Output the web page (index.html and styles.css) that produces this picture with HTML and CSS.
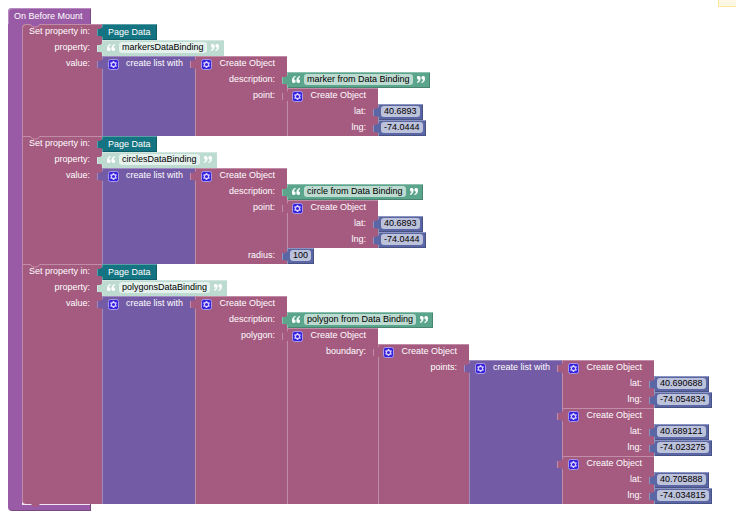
FILE: index.html
```html
<!DOCTYPE html>
<html lang="en">
<head>
<meta charset="utf-8">
<meta name="viewport" content="width=device-width, initial-scale=1">
<title>On Before Mount</title>
<link rel="stylesheet" href="styles.css">
</head>
<body>
<svg class="defs" aria-hidden="true">
  <symbol id="gear" viewBox="0 0 11 11">
    <rect x=".5" y=".5" width="10" height="10" rx="2" fill="#3a22dc" stroke="#a49be8"/>
    <path d="M5.500 2v1M5.500 8v1M2.500 3.700l.9.600M7.600 6.700l.9.600M2.500 7.300l.9-.600M7.600 4.300l.9-.600" stroke="#d5d0ff" stroke-width="1.500"/>
    <circle cx="5.500" cy="5.500" r="2.100" fill="none" stroke="#d5d0ff" stroke-width="1.100"/>
  </symbol>
  <symbol id="open" viewBox="0 0 7 6">
    <path d="M3 0C1 .6 0 2 0 4c0 1.200.6 2 1.600 2S3 5.400 3 4.500 2.500 3 1.500 3C1.500 2 2 1.200 3 .8zM7 0C5 .6 4 2 4 4c0 1.200.6 2 1.600 2S7 5.400 7 4.500 6.500 3 5.500 3C5.500 2 6 1.200 7 .8z" fill="currentColor" stroke="currentColor" stroke-width=".3"/>
  </symbol>
  <symbol id="close" viewBox="0 0 7 6">
    <path d="M0 6c2-.6 3-2 3-4C3 .8 2.400 0 1.400 0S0 .6 0 1.500 .5 3 1.500 3C1.500 4 1 4.800 0 5.200zM4 6c2-.6 3-2 3-4C7 .8 6.400 0 5.400 0S4 .6 4 1.500 4.500 3 5.500 3C5.500 4 5 4.800 4 5.200z" fill="currentColor" stroke="currentColor" stroke-width=".3"/>
  </symbol>
  <symbol id="notch" viewBox="0 0 12 4">
    <path d="M0 0h12L8 3H4z" fill="var(--above)"/>
    <path d="M0 .5h1l3 2.500h4l3-2.500h1" fill="none" stroke="#c992ae"/>
  </symbol>
</svg>
<div class="notice"></div>
<main class="event">
  <h1 class="hat">On Before Mount</h1>
  <div class="stack">

    <section class="block set first">
      <svg class="notch"><use href="#notch"/></svg>
      <div class="row"><div class="cell">Set property in:</div><div class="block page">Page Data</div></div>
      <div class="row"><label class="cell" for="p1">property:</label><div class="block text soft"><svg class="quote"><use href="#open"/></svg><input id="p1" value="markersDataBinding"><svg class="quote"><use href="#close"/></svg></div></div>
      <div class="row"><div class="cell">value:</div>
        <div class="block list">
          <div class="row"><div class="cell"><button aria-label="Edit list"><svg><use href="#gear"/></svg></button>create list with</div>
            <div class="block object">
              <div class="row"><div class="cell"><button aria-label="Edit object"><svg><use href="#gear"/></svg></button>Create Object</div></div>
              <div class="row"><label class="cell" for="d1">description:</label><div class="block text"><svg class="quote"><use href="#open"/></svg><input id="d1" value="marker from Data Binding"><svg class="quote"><use href="#close"/></svg></div></div>
              <div class="row"><div class="cell">point:</div>
                <div class="block object">
                  <div class="row"><div class="cell"><button aria-label="Edit object"><svg><use href="#gear"/></svg></button>Create Object</div></div>
                  <div class="row"><label class="cell" for="lat1">lat:</label><div class="block number"><input id="lat1" value="40.6893"></div></div>
                  <div class="row"><label class="cell" for="lng1">lng:</label><div class="block number"><input id="lng1" value="-74.0444"></div></div>
                </div>
              </div>
            </div>
          </div>
        </div>
      </div>
    </section>

    <section class="block set">
      <svg class="notch"><use href="#notch"/></svg>
      <div class="row"><div class="cell">Set property in:</div><div class="block page">Page Data</div></div>
      <div class="row"><label class="cell" for="p2">property:</label><div class="block text soft"><svg class="quote"><use href="#open"/></svg><input id="p2" value="circlesDataBinding"><svg class="quote"><use href="#close"/></svg></div></div>
      <div class="row"><div class="cell">value:</div>
        <div class="block list">
          <div class="row"><div class="cell"><button aria-label="Edit list"><svg><use href="#gear"/></svg></button>create list with</div>
            <div class="block object">
              <div class="row"><div class="cell"><button aria-label="Edit object"><svg><use href="#gear"/></svg></button>Create Object</div></div>
              <div class="row"><label class="cell" for="d2">description:</label><div class="block text"><svg class="quote"><use href="#open"/></svg><input id="d2" value="circle from Data Binding"><svg class="quote"><use href="#close"/></svg></div></div>
              <div class="row"><div class="cell">point:</div>
                <div class="block object">
                  <div class="row"><div class="cell"><button aria-label="Edit object"><svg><use href="#gear"/></svg></button>Create Object</div></div>
                  <div class="row"><label class="cell" for="lat2">lat:</label><div class="block number"><input id="lat2" value="40.6893"></div></div>
                  <div class="row"><label class="cell" for="lng2">lng:</label><div class="block number"><input id="lng2" value="-74.0444"></div></div>
                </div>
              </div>
              <div class="row"><label class="cell" for="r2">radius:</label><div class="block number"><input id="r2" value="100"></div></div>
            </div>
          </div>
        </div>
      </div>
    </section>

    <section class="block set last">
      <svg class="notch"><use href="#notch"/></svg>
      <div class="row"><div class="cell">Set property in:</div><div class="block page">Page Data</div></div>
      <div class="row"><label class="cell" for="p3">property:</label><div class="block text soft"><svg class="quote"><use href="#open"/></svg><input id="p3" value="polygonsDataBinding"><svg class="quote"><use href="#close"/></svg></div></div>
      <div class="row"><div class="cell">value:</div>
        <div class="block list">
          <div class="row"><div class="cell"><button aria-label="Edit list"><svg><use href="#gear"/></svg></button>create list with</div>
            <div class="block object">
              <div class="row"><div class="cell"><button aria-label="Edit object"><svg><use href="#gear"/></svg></button>Create Object</div></div>
              <div class="row"><label class="cell" for="d3">description:</label><div class="block text"><svg class="quote"><use href="#open"/></svg><input id="d3" value="polygon from Data Binding"><svg class="quote"><use href="#close"/></svg></div></div>
              <div class="row"><div class="cell">polygon:</div>
                <div class="block object">
                  <div class="row"><div class="cell"><button aria-label="Edit object"><svg><use href="#gear"/></svg></button>Create Object</div></div>
                  <div class="row"><div class="cell">boundary:</div>
                    <div class="block object">
                      <div class="row"><div class="cell"><button aria-label="Edit object"><svg><use href="#gear"/></svg></button>Create Object</div></div>
                      <div class="row"><div class="cell">points:</div>
                        <div class="block list">
                          <div class="row"><div class="cell"><button aria-label="Edit list"><svg><use href="#gear"/></svg></button>create list with</div>
                            <div class="block object">
                              <div class="row"><div class="cell"><button aria-label="Edit object"><svg><use href="#gear"/></svg></button>Create Object</div></div>
                              <div class="row"><label class="cell" for="lat3">lat:</label><div class="block number"><input id="lat3" value="40.690688"></div></div>
                              <div class="row"><label class="cell" for="lng3">lng:</label><div class="block number"><input id="lng3" value="-74.054834"></div></div>
                            </div>
                          </div>
                          <div class="row"><div class="cell"></div>
                            <div class="block object">
                              <div class="row"><div class="cell"><button aria-label="Edit object"><svg><use href="#gear"/></svg></button>Create Object</div></div>
                              <div class="row"><label class="cell" for="lat4">lat:</label><div class="block number"><input id="lat4" value="40.689121"></div></div>
                              <div class="row"><label class="cell" for="lng4">lng:</label><div class="block number"><input id="lng4" value="-74.023275"></div></div>
                            </div>
                          </div>
                          <div class="row"><div class="cell"></div>
                            <div class="block object">
                              <div class="row"><div class="cell"><button aria-label="Edit object"><svg><use href="#gear"/></svg></button>Create Object</div></div>
                              <div class="row"><label class="cell" for="lat5">lat:</label><div class="block number"><input id="lat5" value="40.705888"></div></div>
                              <div class="row"><label class="cell" for="lng5">lng:</label><div class="block number"><input id="lng5" value="-74.034815"></div></div>
                            </div>
                          </div>
                        </div>
                      </div>
                    </div>
                  </div>
                </div>
              </div>
            </div>
          </div>
        </div>
      </div>
    </section>

  </div>
  <div class="foot"></div>
</main>
</body>
</html>
```
FILE: styles.css
```css
* { box-sizing: border-box; }

body {
  margin: 8px;
  background: #fff;
  color: #fff;
  font: 9px/16px "Liberation Sans", Arial, sans-serif;
  white-space: nowrap;
}

.defs { position: absolute; width: 0; height: 0; }

.notice {
  position: absolute;
  top: 0;
  right: 0;
  width: 18px;
  height: 7px;
  background: #fff8e5;
  border: solid #ffe49c;
  border-width: 0 0 1px 1px;
}

/* Event wrapper: hat, left arm and foot */
.hat {
  width: 83px;
  margin: 0;
  padding-left: 6px;
  font: inherit;
  background: #995ba5;
  border-radius: 4px 0 0 0;
  box-shadow: inset 1px 1px #b88cc0, inset -1px 0 #7a4984;
}

.stack {
  width: max-content;
  border-left: 14px solid #995ba5;
}

.foot {
  width: 83px;
  height: 7px;
  background: linear-gradient(#f0e4f2, #f0e4f2) 14px 0 / 100% 1px no-repeat #995ba5;
  border-radius: 0 0 0 4px;
  box-shadow: inset -1px -1px #7a4984;
}

/* Blocks */
.block { position: relative; width: max-content; }
.row { display: flex; }

.cell {
  display: flex;
  flex: none;
  justify-content: flex-end;
  width: var(--body);
  min-height: 16px;
  padding-right: 12px;
  line-height: 15px;
  background: var(--fill);
  box-shadow: inset 1px 0 var(--light);
}

.row:first-child > .cell { box-shadow: inset 1px 1px var(--light); }

.set { --body: 80px; --fill: #a55b80; --light: #c08ca6; --above: #a55b80; }
.first { --above: #995ba5; background: #995ba5; }
.first > .row:first-of-type > .cell { border-radius: 4px 0 0 0; }
.first { background: linear-gradient(#995ba5, #995ba5) 0 0 / 4px 4px no-repeat; }
.set > .row > .cell { box-shadow: inset 1px 0 var(--light); }
.set > .row:first-of-type > .cell { box-shadow: inset 1px 1px var(--light); }
.last > .row:last-child > .cell { border-radius: 0 0 0 4px; }

.list { --body: 93px; --fill: #745ba5; --light: #9e8cc0; }
.object { --body: 91px; --fill: #a55b80; --light: #c08ca6; }
.list > .row > .object { --body: 92px; }
.page { --fill: #147482; --light: #5b9ea8; --dark: #105d68; }
.text { --fill: #5ba58c; --light: #8cc0ae; --dark: #498470; --field: #bddbd1; }
.soft { --fill: #bddbd1; --light: #d1e6df; --dark: #bddbd1; --field: #e5f1ed; }
.number { --fill: #5b67a5; --light: #8c95c0; --dark: #495284; --field: #bdc2db; }

.page, .text, .number {
  display: flex;
  align-items: center;
  height: 16px;
  padding: 0 6px;
  line-height: 15px;
  background: var(--fill);
  box-shadow: inset 1px 1px var(--light), inset -1px -1px var(--dark);
}

.text { gap: 4px; }
.number { padding: 0 3px; }

/* Output tab on the left edge of value blocks */
.list::before, .object::before, .page::before, .text::before, .number::before {
  content: "";
  position: absolute;
  top: 3px;
  left: -5px;
  width: 6px;
  height: 10px;
  background: linear-gradient(90deg, var(--light) 1px, var(--fill) 1px);
  clip-path: polygon(0 20%, 50% 20%, 100% 0, 100% 100%, 50% 90%, 0 90%);
}

.notch {
  position: absolute;
  top: 0;
  left: 7px;
  width: 12px;
  height: 4px;
}

.last::after {
  content: "";
  position: absolute;
  bottom: -3px;
  left: 9px;
  width: 9px;
  height: 3px;
  background: #a55b80;
  clip-path: polygon(0 0, 100% 0, 67% 100%, 33% 100%);
}

/* Fields */
input {
  field-sizing: content;
  height: 11px;
  padding: 0 3px;
  border: 0;
  border-radius: 3px;
  background: var(--field);
  color: #000;
  font: 9px/11px "Liberation Sans", Arial, sans-serif;
}

.text input, .number input { margin-bottom: 1px; }

button {
  width: 11px;
  height: 11px;
  margin: 3px 7px 0 0;
  padding: 0;
  border: 0;
  background: none;
}

button svg { display: block; width: 11px; height: 11px; }
.quote { width: 8px; height: 7px; margin-bottom: 2px; }
.text { padding: 0 5px; }
```
